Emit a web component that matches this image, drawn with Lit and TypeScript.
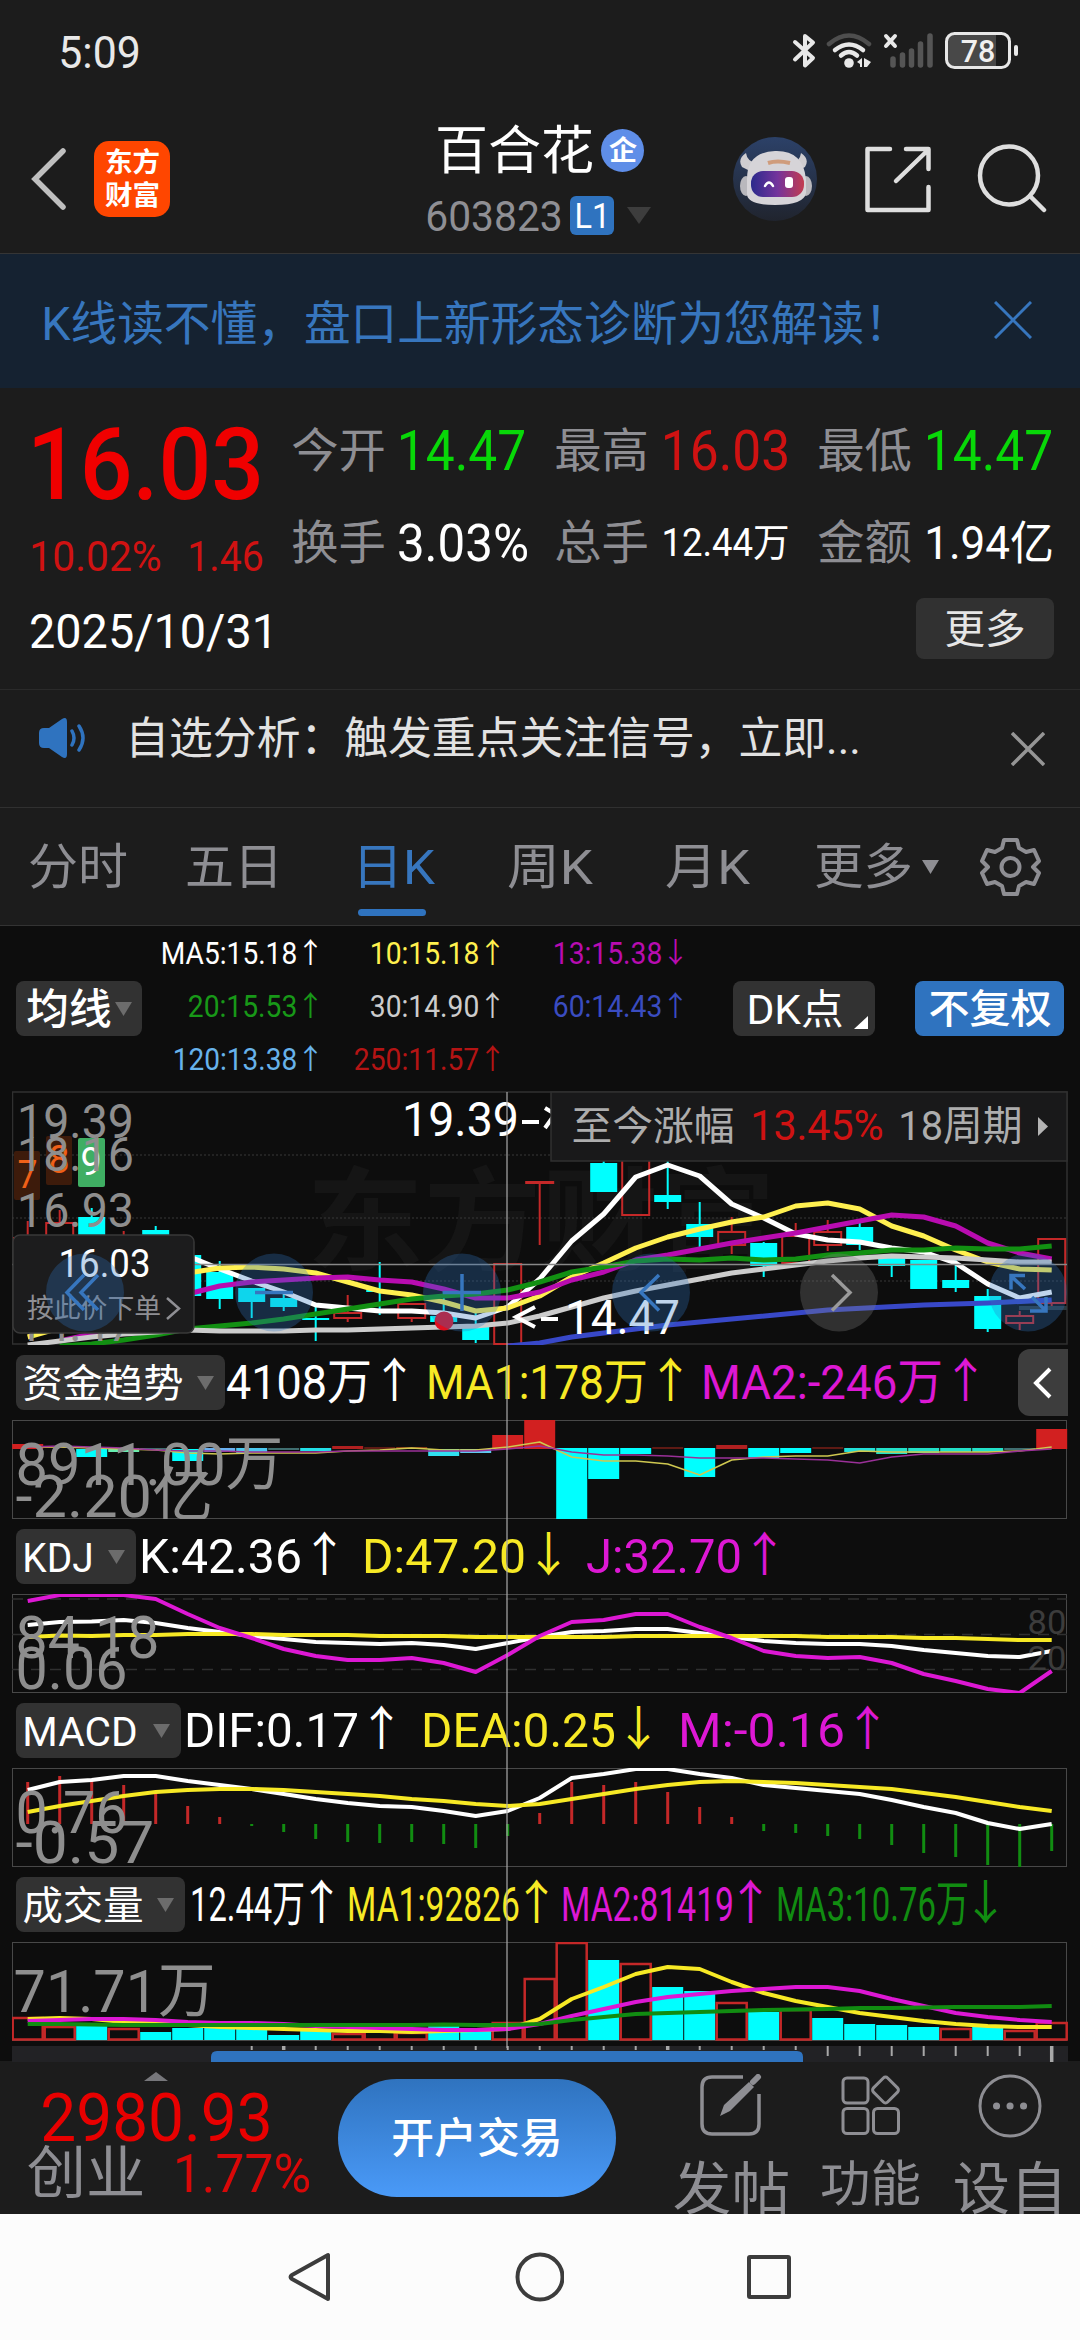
import { LitElement, html, svg, css } from "lit";
import { customElement } from "lit/decorators.js";

const STEP = 32;
const FIRST = 27.7;
const cx = (i: number) => FIRST + i * STEP;

type Point = [number, number];

// one y value for each trading day
const series = (start: number, values: number[]): Point[] => values.map((y, i) => [start + i, y]);

const line = (points: Point[], color: string, width = 5) => svg`
    <polyline points=${points.map(([i, y]) => `${cx(i)},${y}`).join(" ")} fill="none" stroke=${color} stroke-width=${width} stroke-linejoin="round" />`;

const label = (text: string, x: number, y: number, width: number, size: number, color = "#8e8e8e", weight = 400) => svg`
    <text x=${x - size * 0.04} y=${y} textLength=${width + size * 0.08} lengthAdjust="spacingAndGlyphs" font-size=${size} font-weight=${weight} fill=${color}>${text}</text>`;

// text that always fills the given width, its box is as high as the capitals
const fit = (text: string, width: number, size: number, color = "#fff", weight = 400) => html`
    <svg class="fit" width=${width} height=${Math.round(size * 0.72)}>${label(text, 0, Math.round(size * 0.72), width, size, color, weight)}</svg>`;

interface Value { text: string; width: number; arrow: string; color: string; }

const WHITE = "#ffffff";
const YELLOW = "#f7e925";
const MAGENTA = "#dd18d4";
const GREEN = "#118c11";
const RED = "#c42828";
const CYAN = "#00ffff";

// [day, top, bottom, high, low, rising]
const candles: [number, number, number, number, number, boolean][] = [
    [0, 1238, 1270, 1221, 1270, true],
    [1, 1223, 1260, 1210, 1260, true],
    [2, 1217, 1260, 1208, 1260, false],
    [3, 1240, 1260, 1231, 1260, true],
    [4, 1230, 1260, 1226, 1260, false],
    [5, 1255, 1296, 1250, 1296, false],
    [6, 1272, 1299, 1261, 1309, false],
    [7, 1288, 1302, 1288, 1318, false],
    [8, 1298, 1307, 1293, 1311, false],
    [9, 1318, 1320, 1305, 1341, false],
    [10, 1313, 1318, 1295, 1322, true],
    [11, 1290, 1292, 1262, 1315, false],
    [12, 1304, 1318, 1304, 1322, true],
    [13, 1316, 1322, 1290, 1322, false],
    [14, 1327, 1340, 1312, 1343, false],
    [15, 1264, 1344, 1264, 1344, true],
    [16, 1182, 1183, 1182, 1245, true],
    [18, 1163, 1192, 1158, 1192, false],
    [19, 1140, 1215, 1140, 1215, true],
    [20, 1195, 1202, 1158, 1209, false],
    [21, 1224, 1237, 1202, 1247, false],
    [22, 1232, 1245, 1217, 1254, true],
    [23, 1243, 1266, 1242, 1277, false],
    [24, 1236, 1263, 1223, 1263, true],
    [25, 1232, 1245, 1220, 1251, true],
    [26, 1227, 1245, 1223, 1250, false],
    [27, 1258, 1266, 1256, 1277, false],
    [28, 1260, 1289, 1260, 1289, false],
    [29, 1280, 1288, 1260, 1292, false],
    [30, 1296, 1329, 1289, 1332, false],
    [31, 1316, 1323, 1311, 1330, true],
    [32, 1239, 1303, 1239, 1306, true],
];

const ma5 = series(4, [1250, 1256, 1269, 1281, 1292, 1305, 1308, 1311, 1311, 1313, 1318, 1307, 1279, 1241, 1214, 1177, 1165, 1176, 1204, 1218, 1234, 1240, 1242, 1248, 1252, 1263, 1284, 1298, 1292]);
const ma10 = series(0, [1337, 1328, 1310, 1295, 1282, 1273, 1268, 1267, 1269, 1273, 1282, 1291, 1295, 1302, 1311, 1308, 1296, 1277, 1263, 1248, 1237, 1229, 1222, 1217, 1206, 1203, 1209, 1226, 1236, 1250, 1262, 1269, 1270]);
const ma13 = series(1, [1341, 1334, 1320, 1305, 1294, 1286, 1282, 1280, 1278, 1277, 1280, 1282, 1289, 1298, 1298, 1292, 1280, 1272, 1260, 1255, 1249, 1243, 1238, 1233, 1227, 1221, 1215, 1217, 1226, 1243, 1253, 1259]);
const ma20 = series(1, [1346, 1344, 1340, 1335, 1329, 1326, 1323, 1319, 1314, 1309, 1304, 1299, 1296, 1294, 1290, 1282, 1272, 1267, 1261, 1259, 1260, 1258, 1260, 1259, 1255, 1253, 1250, 1250, 1248, 1249, 1249, 1246]);
const ma30 = series(0, [1345, 1341, 1337, 1334, 1332, 1330, 1331, 1331, 1331, 1330, 1330, 1329, 1328, 1327, 1326, 1323, 1316, 1307, 1298, 1291, 1285, 1279, 1273, 1269, 1265, 1261, 1258, 1256, 1257, 1258, 1260, 1262, 1262]);
const ma60: Point[] = [[15, 1346], [16, 1343], [17, 1337], [18, 1333], [20, 1325], [22, 1319], [25, 1310], [28, 1305], [30, 1303], [32, 1300]];

// [day, top, bottom, color]
const flowBars: [number, number, number, string][] = [
    [0, 1443, 1448, "#d22020"], [1, 1445, 1447, "#7a1a1a"], [2, 1448, 1456, CYAN], [3, 1447, 1451, "#66eeb0"], [4, 1447, 1449, "#406e70"],
    [5, 1448, 1460, CYAN], [6, 1447, 1451, "#6ab0f0"], [7, 1447, 1452, "#4cc8f0"], [8, 1447, 1449, "#406e70"], [9, 1447, 1450, "#22e0e8"],
    [10, 1445, 1448, "#b02020"], [11, 1446, 1448, "#5e1a14"], [12, 1446, 1448, "#8a3a14"], [13, 1448, 1455, "#30e0f0"], [14, 1448, 1452, "#60c8f0"],
    [15, 1434, 1448, "#d22020"], [16, 1419, 1448, "#d22020"], [17, 1447, 1518, CYAN], [18, 1447, 1478, CYAN], [19, 1447, 1453, CYAN],
    [20, 1446, 1448, "#5e1a14"], [21, 1447, 1476, CYAN], [22, 1444, 1448, "#b02020"], [23, 1447, 1457, CYAN], [24, 1447, 1452, CYAN],
    [25, 1446, 1448, "#5e1a14"], [26, 1447, 1451, "#22e0d8"], [27, 1447, 1453, "#22e0c8"], [28, 1447, 1452, "#22e0c8"], [29, 1447, 1451, "#22e0c8"],
    [30, 1447, 1451, "#22e0c8"], [31, 1447, 1449, "#406e70"], [32, 1428, 1448, "#d22020"],
];
const flowFast = series(0, [1446, 1446, 1447, 1448, 1449, 1452, 1453, 1452, 1452, 1452, 1450, 1449, 1447, 1449, 1449, 1446, 1441, 1456, 1460, 1460, 1463, 1474, 1459, 1456, 1455, 1455, 1450, 1451, 1451, 1451, 1451, 1450, 1446]);
const flowSlow = series(0, [1446, 1445, 1446, 1447, 1449, 1450, 1450, 1451, 1451, 1451, 1450, 1450, 1450, 1450, 1450, 1448, 1445, 1451, 1454, 1454, 1455, 1457, 1457, 1457, 1458, 1459, 1462, 1456, 1453, 1453, 1453, 1450, 1448]);

const kdjK = series(0, [1624, 1621, 1620.5, 1619, 1622, 1627, 1631, 1635, 1638, 1641, 1642, 1643, 1642, 1644, 1648, 1642, 1636, 1631, 1630, 1628, 1628, 1632, 1636, 1640, 1642, 1643, 1643, 1645, 1649, 1652, 1655, 1656, 1650]);
const kdjD = series(0, [1636, 1634.5, 1635, 1634, 1634, 1633, 1633, 1633, 1634, 1634, 1634, 1635, 1635, 1635, 1636, 1636, 1636, 1636, 1636, 1635, 1635, 1635, 1635, 1635, 1635, 1636, 1636, 1636, 1637, 1637, 1638, 1639, 1639]);
const kdjJ = series(0, [1600, 1594, 1594, 1594, 1598, 1613, 1627, 1637, 1648, 1655, 1659, 1659, 1657, 1662, 1671, 1654, 1635, 1621, 1619, 1613, 1613, 1626, 1637, 1650, 1655, 1657, 1656, 1662, 1673, 1680, 1688, 1692, 1670]);

const macdBars = [1781, 1775, 1780, 1784, 1791, 1805, 1816, 1825, 1831, 1838, 1841, 1842, 1841, 1843, 1847, 1835, 1812, 1781, 1784, 1781, 1791, 1806, 1816, 1830, 1832, 1835, 1838, 1844, 1852, 1856, 1864, 1866, 1850];
const macdDif = series(0, [1789, 1781, 1779, 1775, 1775, 1780, 1784, 1788, 1793, 1798, 1802, 1805, 1806, 1810, 1815, 1810, 1797, 1777, 1773, 1768, 1768, 1773, 1777, 1784, 1787, 1790, 1793, 1799, 1806, 1812, 1822, 1828, 1823]);
const macdDea = series(0, [1811, 1805, 1800, 1795, 1791, 1789, 1788, 1788, 1789, 1791, 1793, 1795, 1798, 1800, 1803, 1805, 1803, 1798, 1793, 1788, 1784, 1781, 1780, 1781, 1782, 1784, 1786, 1788, 1792, 1796, 1801, 1806, 1810]);

const volumeTops = [2017, 2026, 2025, 2028, 2031, 2027, 2027, 2028, 2034, 2030, 2033, 2028, 2032, 2025, 2029, 2022, 1978, 1942, 1959, 1963, 1986, 1990, 2002, 2011, 2009, 2017, 2023, 2024, 2026, 2028, 2026, 2030, 2022];
const volumeRising = [0, 1, 3, 10, 11, 12, 15, 16, 17, 19, 22, 24, 29, 31, 32];
const volumeMa1 = series(0, [2018, 2017, 2018, 2021, 2022, 2024, 2026, 2027, 2028, 2029, 2030, 2030, 2031, 2030, 2029, 2028, 2018, 1998, 1986, 1973, 1966, 1968, 1981, 1992, 2000, 2006, 2012, 2016, 2020, 2023, 2025, 2026, 2026]);
const volumeMa2 = series(0, [2020, 2019, 2018, 2018, 2019, 2021, 2022, 2022, 2023, 2025, 2026, 2027, 2028, 2029, 2029, 2028, 2023, 2015, 2008, 2001, 1996, 1993, 1990, 1988, 1986, 1986, 1990, 1998, 2005, 2012, 2016, 2019, 2021]);
const volumeMa3 = series(0, [2023, 2023, 2023.5, 2024, 2024, 2024, 2024, 2024, 2024, 2024, 2024, 2024, 2024, 2023.5, 2024, 2024, 2023, 2019, 2016, 2013, 2012, 2011, 2010, 2009, 2008.5, 2008, 2007, 2007, 2006.5, 2006, 2006, 2006, 2005]);

const caret = html`<svg class="caret" width="17" height="14" viewBox="0 0 17 14"><path d="M0 0h17l-8.500 14z" fill="#6c6c6c" /></svg>`;

@customElement("app-root")
export class AppRoot extends LitElement {
    static styles = css`
        :host {
            display: block;
            width: 1080px;
            height: 2340px;
            overflow: hidden;
            background-color: #1c1c1c;
            color: white;
            font-family: Roboto, "Noto Sans CJK SC", sans-serif;
        }
        svg {
            display: block;
            flex: none;
        }
        .fit {
            overflow: visible;
        }
        .row {
            display: flex;
            align-items: center;
        }
        .status {
            padding: 32px 62px 0 60px;
            justify-content: space-between;
            align-items: flex-start;
            box-sizing: border-box;
            height: 104px;
        }
        .time {
            padding-top: 4px;
        }
        .header {
            display: grid;
            grid-template-columns: 94px 76px 257px 246px 60px 84px 47px 66px 48px 70px;
            align-items: center;
            height: 150px;
            box-sizing: border-box;
            border-bottom: 1px solid #353535;
        }
        .back {
            margin-left: 30px;
        }
        .logo {
            display: flex;
            flex-direction: column;
            align-items: center;
            justify-content: center;
            gap: 14px;
            width: 76px;
            height: 76px;
            border-radius: 15px;
            background-color: #ff4600;
        }
        .stock {
            grid-column: 4;
            display: flex;
            flex-direction: column;
            gap: 24px;
            padding-top: 7px;
        }
        .name {
            gap: 9px;
            padding-left: 10px;
        }
        .badge {
            display: flex;
            align-items: center;
            justify-content: center;
            width: 43px;
            height: 43px;
            border-radius: 50%;
            background-color: #5f8ee8;
        }
        .code {
            gap: 9px;
            height: 39px;
        }
        .level {
            display: flex;
            align-items: center;
            justify-content: center;
            width: 44px;
            height: 39px;
            border-radius: 6px;
            background-color: #2f73bf;
        }
        .robot {
            grid-column: 6;
        }
        .share {
            grid-column: 8;
        }
        .search {
            grid-column: 10;
            margin-left: -1px;
        }
        .banner {
            height: 134px;
            box-sizing: border-box;
            padding: 0 48px 2px 43px;
            justify-content: space-between;
            background-color: #152231;
        }
        .advice {
            padding-top: 6px;
        }
        .quote {
            display: grid;
            grid-template-columns: 262px 1fr;
            height: 302px;
            box-sizing: border-box;
            border-bottom: 1px solid #2a2a2a;
        }
        .price {
            padding: 38px 0 0 31px;
        }
        .change {
            justify-content: space-between;
            margin: 41px 0 42px;
        }
        .stats {
            display: grid;
            grid-template-columns: 106px 157px 107px 156px 107px 128px;
            grid-template-rows: 92px 92px 92px;
            align-items: center;
            padding: 16px 0 0 31px;
        }
        .more {
            display: flex;
            align-items: center;
            justify-content: center;
            grid-column: 5 / 7;
            justify-self: end;
            width: 138px;
            height: 61px;
            margin-bottom: 12px;
            border-radius: 8px;
            background-color: #313131;
        }
        .notice {
            height: 118px;
            box-sizing: border-box;
            padding: 0 35px 0 38px;
            border-bottom: 1px solid #303030;
        }
        .message {
            flex: 1;
            margin-top: -20px;
            padding: 0 0 2px 40px;
        }
        .speaker {
            margin-top: -22px;
        }
        .tabs {
            display: grid;
            grid-template-columns: 157px 171px 151px 158px 149px 106px 61px;
            align-items: center;
            height: 118px;
            padding-left: 30px;
            box-sizing: border-box;
            border-bottom: 1px solid #333;
        }
        .tab {
            position: relative;
        }
        .selected::after {
            content: "";
            position: absolute;
            left: 0;
            bottom: -32px;
            width: 68px;
            height: 7px;
            border-radius: 4px;
            background-color: #2f73bf;
        }
        .selected .fit {
            margin-left: -4px;
        }
        .chart {
            position: relative;
            height: 1135px;
            background-color: #0d0d0d;
        }
        .averages {
            display: grid;
            grid-template-columns: 126px 177px 182px 183px 49px 142px 40px 149px;
            align-items: center;
            height: 165px;
            padding-left: 16px;
        }
        .column {
            display: flex;
            flex-direction: column;
            align-items: flex-end;
            gap: 31px;
            height: 130px;
            padding-bottom: 3px;
        }
        .value {
            display: flex;
            align-items: center;
            gap: 6px;
        }
        .button {
            display: flex;
            align-items: center;
            height: 55px;
            border-radius: 8px;
            background-color: #323232;
            box-sizing: border-box;
        }
        .button .caret {
            margin-left: auto;
        }
        .average {
            padding: 0 10px 0 12px;
        }
        .dk {
            grid-column: 6;
            padding: 0 7px 0 15px;
            justify-content: space-between;
        }
        .corner {
            align-self: flex-end;
            margin-bottom: 7px;
        }
        .restore {
            grid-column: 8;
            justify-content: center;
            background-color: #2f73bf;
        }
        .arrow {
            overflow: visible;
            font-family: "Noto Sans CJK SC", sans-serif;
        }
        .panel {
            margin-left: 12px;
        }
        .indicator {
            display: flex;
            align-items: center;
            height: 75px;
            padding-left: 16px;
        }
        .indicator .button {
            padding: 0 11px 0 8px;
        }
        .values {
            display: flex;
            align-items: center;
            padding-bottom: 3px;
        }
        .drawer {
            display: flex;
            align-items: center;
            justify-content: center;
            width: 50px;
            height: 67px;
            margin: 0 12px 0 auto;
            border-radius: 12px 0 0 12px;
            background-color: #3d3d3d;
        }
        .crosshair {
            position: absolute;
            left: 506px;
            top: 166px;
            width: 2px;
            height: 956px;
            background-color: rgba(170, 170, 170, 0.6);
        }
        .bottom {
            display: grid;
            grid-template-columns: 338px 278px 58px 114px 32px 101px 30px 129px;
            height: 153px;
            overflow: hidden;
        }
        .index {
            padding: 11px 0 0 29px;
        }
        .up {
            margin-left: 115px;
        }
        .points {
            margin: 12px 0 0 14px;
        }
        .market {
            gap: 32px;
            margin-top: 11px;
        }
        .trade {
            display: flex;
            align-items: center;
            justify-content: center;
            height: 118px;
            margin-top: 18px;
            border-radius: 59px;
            background-image: linear-gradient(#2f73bf, #4a9af8);
        }
        .action {
            display: flex;
            flex-direction: column;
            align-items: center;
            gap: 30px;
            padding-top: 13px;
        }
        .post {
            grid-column: 4;
        }
        .tools {
            grid-column: 6;
        }
        .settings {
            grid-column: 8;
            padding-right: 12px;
        }
        .nav {
            display: flex;
            align-items: center;
            justify-content: center;
            gap: 182px;
            height: 126px;
            background-color: #fcfcfc;
        }
    `;

    render() {
        return html`
            ${this._status()}
            ${this._header()}
            <div class="row banner">
                <div class="advice">${fit("K线读不懂，盘口上新形态诊断为您解读！", 866, 46.8, "#3776be")}</div>
                <svg width="38" height="38" viewBox="0 0 38 38"><path d="M1 1l36 36M37 1L1 37" stroke="#3776be" stroke-width="3" /></svg>
            </div>
            ${this._quote()}
            <div class="row notice">
                <svg class="speaker" width="49" height="40" viewBox="0 0 49 40">
                    <path d="M1 15q0-5 5-5h5L24 1q5-3 5 3v32q0 6-5 3L11 30H6q-5 0-5-5z" fill="#2f73bf" />
                    <path d="M34 13q4 7 0 14M41 8q8 12 0 24" fill="none" stroke="#2f73bf" stroke-width="3.500" stroke-linecap="round" />
                </svg>
                <div class="message">${fit("自选分析：触发重点关注信号，立即...", 732, 44.3, "#e2e2e2")}</div>
                <svg width="34" height="34" viewBox="0 0 34 34"><path d="M1 1l32 32M33 1L1 33" stroke="#959595" stroke-width="3.500" /></svg>
            </div>
            ${this._tabs()}
            <div class="chart">
                ${this._averages()}
                ${this._candlePanel()}
                ${this._indicator("资金趋势", 209, 158, 39, 3, 20.5, 25, [
                    { text: "4108万", width: 142, arrow: "↑", color: WHITE },
                    { text: "MA1:178万", width: 218, arrow: "↑", color: YELLOW },
                    { text: "MA2:-246万", width: 238, arrow: "↑", color: MAGENTA },
                ], true)}
                ${this._flowPanel()}
                ${this._indicator("KDJ", 120, 68, 41, 5, 27, 25, [
                    { text: "K:42.36", width: 159, arrow: "↑", color: WHITE },
                    { text: "D:47.20", width: 160, arrow: "↓", color: YELLOW },
                    { text: "J:32.70", width: 152, arrow: "↑", color: MAGENTA },
                ])}
                ${this._kdjPanel()}
                ${this._indicator("MACD", 165, 112, 41, 5, 29, 25, [
                    { text: "DIF:0.17", width: 171, arrow: "↑", color: WHITE },
                    { text: "DEA:0.25", width: 191, arrow: "↓", color: YELLOW },
                    { text: "M:-0.16", width: 163, arrow: "↑", color: MAGENTA },
                ])}
                ${this._macdPanel()}
                ${this._indicator("成交量", 169, 118, 39, 7, 18.5, 17, [
                    { text: "12.44万", width: 111, arrow: "↑", color: WHITE },
                    { text: "MA1:92826", width: 169, arrow: "↑", color: YELLOW },
                    { text: "MA2:81419", width: 169, arrow: "↑", color: MAGENTA },
                    { text: "MA3:10.76万", width: 189, arrow: "↓", color: GREEN },
                ])}
                ${this._volumePanel()}
                <div class="crosshair"></div>
            </div>
            ${this._bottom()}
            <div class="nav">
                <svg width="44" height="50" viewBox="0 0 44 50"><path d="M40 3v44L4 27q-3-2 0-4z" fill="none" stroke="#3c3c3c" stroke-width="4" stroke-linejoin="round" /></svg>
                <svg width="50" height="50" viewBox="0 0 50 50"><circle cx="26" cy="25" r="22.500" fill="none" stroke="#3c3c3c" stroke-width="4" /></svg>
                <svg width="46" height="46" viewBox="0 0 46 46"><rect x="3" y="3" width="40" height="40" rx="1" fill="none" stroke="#3c3c3c" stroke-width="4" /></svg>
            </div>
        `;
    }

    _status() {
        return html`
            <div class="row status">
                <div class="time">${fit("5:09", 79, 44, "#e8e8e8")}</div>
                <svg width="226" height="40" viewBox="792 32 226 40">
                    <g fill="none" stroke="#e8e8e8" stroke-linecap="round" stroke-linejoin="round">
                        <path d="M795 42l18 16-8 7.500V36l8 6.500-18 17" stroke-width="4" />
                        <path d="M829 44q20-17 40 0" stroke="#4e4e4e" stroke-width="4.500" />
                        <path d="M835 50q14-11 28 0M841 55.500q8-7 16 0" stroke-width="4.500" />
                        <path d="M886 36l9 10M895 36l-9 10" stroke-width="4" />
                    </g>
                    <circle cx="849" cy="63" r="4.800" fill="#e8e8e8" />
                    <path d="M857 62l5-4v9h-2v-3zM864 58l7 4-4 5h-3z" fill="#e8e8e8" />
                    <path d="M893 59v6M902.500 55v10M911.500 51v14M920.500 44v21M930 36v29" stroke="#555" stroke-width="5.500" stroke-linecap="round" />
                    <rect x="948" y="35" width="48" height="31" fill="#484848" />
                    <rect x="946.500" y="33.500" width="63" height="34" rx="8" fill="none" stroke="#e8e8e8" stroke-width="3" />
                    <path d="M1016 47v7" stroke="#e8e8e8" stroke-width="4" stroke-linecap="round" />
                    ${label("78", 962, 62, 32, 32, "#f0f0f0", 500)}
                </svg>
            </div>
        `;
    }

    _header() {
        return html`
            <div class="header">
                <svg class="back" width="36" height="62" viewBox="0 0 36 62"><path d="M33 3L5 31l28 28" fill="none" stroke="#bfbfbf" stroke-width="5.500" stroke-linecap="round" /></svg>
                <div class="logo">
                    ${fit("东方", 53, 27, "#fff", 700)}
                    ${fit("财富", 53, 27, "#fff", 700)}
                </div>
                <div class="stock">
                    <div class="row name">
                        ${fit("百合花", 155, 52)}
                        <div class="badge">${fit("企", 26, 27, "#fff", 700)}</div>
                    </div>
                    <div class="row code">
                        ${fit("603823", 134, 43, "#8f8f94")}
                        <div class="level">${fit("L1", 33, 35)}</div>
                        <svg width="30" height="18" viewBox="-4 0 30 18"><path d="M0 0h24L12 17z" fill="#3d3d3d" /></svg>
                    </div>
                </div>
                ${this._robot()}
                <svg class="share" width="68" height="68" viewBox="0 0 68 68">
                    <path d="M26 4H3.500v61h61V42M42 4h22.500v20M62 7L32 36" fill="none" stroke="#dedede" stroke-width="4.500" stroke-linecap="round" stroke-linejoin="round" />
                </svg>
                <svg class="search" width="70" height="70" viewBox="978 143 70 70">
                    <g fill="none" stroke="#dedede" stroke-width="4.500" stroke-linecap="round"><circle cx="1010" cy="174.500" r="29" /><path d="M1031 195l14 14" /></g>
                </svg>
            </div>
        `;
    }

    _robot() {
        return html`
            <svg class="robot" width="84" height="84" viewBox="0 0 84 84">
                <defs>
                    <linearGradient id="sky" x1="0" y1="0" x2="0" y2="1"><stop offset="0" stop-color="#2c4168" /><stop offset="1" stop-color="#20242e" /></linearGradient>
                    <linearGradient id="visor"><stop offset="0" stop-color="#2b2a8c" /><stop offset=".5" stop-color="#74349c" /><stop offset="1" stop-color="#c23c50" /></linearGradient>
                </defs>
                <circle cx="42" cy="42" r="42" fill="url(#sky)" />
                <path d="M13 16q-9 6-4 14l8 4 6-8q-9-2-10-10zM68 16q9 6 4 14l-8 4-5-8q8-2 9-10z" fill="#cfcdd0" />
                <ellipse cx="13" cy="49" rx="6" ry="10" fill="#b9b8bd" />
                <ellipse cx="73" cy="49" rx="6" ry="10" fill="#b9b8bd" />
                <path d="M14 42Q14 15 42 14t31 28v14q-2 12-31 12T14 56z" fill="#d6d4d8" />
                <rect x="18" y="34" width="53" height="26" rx="12" fill="url(#visor)" />
                <path d="M35 26q9-3 22 0" stroke="#cf9c7c" stroke-width="4" />
                <path d="M32 49q4-7 8 0" fill="none" stroke="#fff" stroke-width="2.500" stroke-linecap="round" />
                <rect x="52" y="40" width="8" height="11" rx="3" fill="#fff" />
            </svg>
        `;
    }

    _quote() {
        const grey = "#8e8e93";
        return html`
            <div class="quote">
                <div class="price">
                    ${fit("16.03", 229, 101, "#f00000", 500)}
                    <div class="row change">
                        ${fit("10.02%", 129, 43, "#cf1212")}
                        ${fit("1.46", 73, 43, "#cf1212")}
                    </div>
                    ${fit("2025/10/31", 245, 49)}
                </div>
                <div class="stats">
                    ${fit("今开", 91, 46.500, grey)}${fit("14.47", 125, 55, "#08d808")}
                    ${fit("最高", 91, 46.500, grey)}${fit("16.03", 125, 55, "#cf1212")}
                    ${fit("最低", 91, 46.500, grey)}${fit("14.47", 125, 55, "#08d808")}
                    ${fit("换手", 91, 46.500, grey)}${fit("3.03%", 128, 52)}
                    ${fit("总手", 91, 46.500, grey)}${fit("12.44万", 125, 39)}
                    ${fit("金额", 91, 46.500, grey)}${fit("1.94亿", 126, 46)}
                    <div class="more">${fit("更多", 78, 40, "#e6e6e6")}</div>
                </div>
            </div>
        `;
    }

    _tabs() {
        const grey = "#8e8e93";
        return html`
            <div class="tabs">
                <div class="tab">${fit("分时", 96, 49, grey)}</div>
                <div class="tab">${fit("五日", 94, 49, grey)}</div>
                <div class="tab selected">${fit("日K", 79, 49, "#3776be")}</div>
                <div class="tab">${fit("周K", 82, 49, grey)}</div>
                <div class="tab">${fit("月K", 81, 49, grey)}</div>
                <div class="tab">${fit("更多", 95, 49, grey)}</div>
                <svg width="120" height="60" viewBox="922 837 120 60">
                    <path d="M922 860h17l-8.500 14z" fill="${grey}" />
                    <path d="M1004 840h13l2 8 7 4 8-2 5 11-6 6 6 6-5 11-8-2-7 4-2 8h-13l-2-8-7-4-8 2-5-11 6-6-6-6 5-11 8 2 7-4z" fill="none" stroke="${grey}" stroke-width="4" stroke-linejoin="round" />
                    <circle cx="1010.500" cy="867" r="9" fill="none" stroke="${grey}" stroke-width="4" />
                </svg>
            </div>
        `;
    }

    _arrow(arrow: string, width: number, size: number, color: string) {
        return html`
            <svg class="arrow" width=${width} height=${size * 0.72}>
                <text x=${width / 2} y=${size * 0.7} text-anchor="middle" font-size=${size} fill=${color}>${arrow}</text>
            </svg>
        `;
    }

    _average(text: string, width: number, arrow: string, color: string) {
        return html`<div class="value">${fit(text, width, 31, color)}${this._arrow(arrow, 17, 28, color)}</div>`;
    }

    _averages() {
        return html`
            <div class="averages">
                <div class="button average">${fit("均线", 82, 42, WHITE, 500)}${caret}</div>
                <div class="column">
                    ${this._average("MA5:15.18", 134, "↑", WHITE)}
                    ${this._average("20:15.53", 107, "↑", "#189818")}
                    ${this._average("120:13.38", 122, "↑", "#67b2ea")}
                </div>
                <div class="column">
                    ${this._average("10:15.18", 107, "↑", "#fff04e")}
                    ${this._average("30:14.90", 107, "↑", "#cccccc")}
                    ${this._average("250:11.57", 123, "↑", "#b41414")}
                </div>
                <div class="column">
                    ${this._average("13:15.38", 107, "↓", "#b80cb0")}
                    ${this._average("60:14.43", 107, "↑", "#3a4cc0")}
                </div>
                <div class="button dk">
                    ${fit("DK点", 94, 41)}
                    <svg class="corner" width="14" height="13" viewBox="0 0 14 13"><path d="M14 0v13H0z" fill="#fff" /></svg>
                </div>
                <div class="button restore">${fit("不复权", 120, 40, WHITE, 500)}</div>
            </div>
        `;
    }

    _candle([i, top, bottom, high, low, rising]: [number, number, number, number, number, boolean]) {
        const x = cx(i);
        if (rising) {
            return svg`
                <path d="M${x} ${high}V${top}M${x} ${bottom}V${low}" stroke=${RED} stroke-width="2" />
                <rect x=${x - 13.5} y=${top} width="27" height=${bottom - top} fill="none" stroke=${RED} stroke-width="2" />`;
        }
        return svg`
            <path d="M${x} ${high}V${low}" stroke=${CYAN} stroke-width="2" />
            <rect x=${x - 13.5} y=${top} width="27" height=${bottom - top} fill=${CYAN} />`;
    }

    _candlePanel() {
        const blue = "rgba(47, 115, 191, 0.3)";
        return html`
            <svg class="panel" width="1056" height="254" viewBox="12 1091 1056 254">
                ${label("东方财富", 311, 1262, 460, 112, "#151515", 700)}
                <rect x="12.500" y="1092" width="1054.500" height="252" fill="none" stroke="#303030" stroke-width="1.500" />
                <path d="M12 1155h1055M12 1218h1055M12 1281h1055" stroke="#383838" stroke-dasharray="2 2" />
                ${candles.map((c) => this._candle(c))}
                ${line(ma5, WHITE)}
                ${line(ma10, "#fff050")}
                ${line(ma13, "#b80cb0")}
                ${line(ma20, "#129012")}
                ${line(ma30, "#cccccc")}
                ${line(ma60, "#3848c8")}
                <path d="M12 1264.500h1055" stroke="#888" stroke-width="1.500" />
                <circle cx="444" cy="1321" r="9.500" fill="#e01020" />
                <path d="M1019 1308h48" stroke="#2c3a40" stroke-width="4" />

                <rect x="14" y="1151" width="26" height="49" rx="2" fill="#3d1b0b" />
                <rect x="46" y="1136" width="26" height="49" rx="2" fill="#3d1b0b" />
                <rect x="78" y="1138" width="27" height="49" rx="2" fill="#3fae63" />
                ${label("7", 19, 1188, 17, 38, "#f06018")}
                ${label("8", 50, 1173, 18, 38, "#f06018")}
                ${label("9", 82, 1175, 18, 38, "#fff")}
                ${label("19.39", 19, 1138, 113, 49)}
                ${label("18.16", 19, 1171, 113, 49)}
                ${label("16.93", 19, 1227, 113, 49)}
                ${label("14.47", 19, 1341, 113, 49)}
                ${label("19.39", 404, 1136, 113, 49, WHITE)}
                <path d="M522 1122h17M545 1108l10 6-10 14" fill="none" stroke="#fff" stroke-width="4" />
                <path d="M535 1307l-19 10 19 10M541 1319h17" fill="none" stroke="#fff" stroke-width="4" />
                ${label("14.47", 567, 1334, 111, 49, WHITE)}

                <rect x="551" y="1092" width="516" height="69" fill="#19191a" stroke="#303030" stroke-width="1.500" />
                ${label("至今涨幅", 573, 1140, 160, 40, "#adadad")}
                ${label("13.45%", 752, 1140, 130, 43, "#cf1212")}
                ${label("18周期", 900, 1140, 121, 41, "#adadad")}
                <path d="M1038 1117v19l10-9.500z" fill="#b4b4b4" />

                <rect x="13" y="1235" width="181" height="98" rx="7" fill="#1c1c1d" stroke="#383838" stroke-width="1.500" />
                ${label("16.03", 60, 1277, 89, 38, WHITE)}
                ${label("按此价下单", 28, 1318, 132, 27, "#8f8f94")}
                <path d="M167 1298l12 10.500-12 10.500" fill="none" stroke="#8f8f94" stroke-width="2.500" />

                ${[85, 274, 462, 651, 1028].map((x) => svg`<circle cx=${x} cy="1292.500" r="39" fill=${blue} />`)}
                <circle cx="839" cy="1292.500" r="39" fill="rgba(130, 130, 130, 0.3)" />
                <g fill="none" stroke="#3776be" stroke-width="3.500">
                    <path d="M84 1275l-17 17.500 17 17.500M98 1275l-17 17.500 17 17.500" />
                    <path d="M255 1292.500h38M443 1292.500h38M462 1274v37" />
                    <path d="M659 1275l-18 17.500 18 18" />
                    <path d="M1025 1275.500h-14v14M1011 1276l14 13M1030 1311h16v-14M1046 1311l-14-14" />
                </g>
                <path d="M832 1275l18 17.500-18 18" fill="none" stroke="#9a9a9a" stroke-width="3.500" />
            </svg>
        `;
    }

    _indicator(name: string, buttonWidth: number, nameWidth: number, nameSize: number, margin: number, gap: number, arrowWidth: number, values: Value[], drawer = false) {
        return html`
            <div class="indicator">
                <div class="button" style="width: ${buttonWidth}px">${fit(name, nameWidth, nameSize)}${caret}</div>
                <div class="values" style="gap: ${gap}px; padding-left: ${margin}px">
                    ${values.map((v) => html`
                        <div class="value" style="gap: ${arrowWidth > 20 ? 12 : 10}px">
                            ${fit(v.text, v.width, 49, v.color)}${this._arrow(v.arrow, arrowWidth, 47, v.color)}
                        </div>`)}
                </div>
                ${drawer ? html`
                    <div class="drawer">
                        <svg width="20" height="32" viewBox="0 0 20 32"><path d="M17 2L3 16l14 14" fill="none" stroke="#fff" stroke-width="4" /></svg>
                    </div>` : ""}
            </div>
        `;
    }

    _panel(top: number, content: unknown) {
        return html`
            <svg class="panel" width="1056" height="99" viewBox="12 ${top} 1056 99">
                <rect x="12.500" y=${top + 0.5} width="1054" height="98" fill="none" stroke="#484848" />
                ${content}
            </svg>
        `;
    }

    _flowPanel() {
        return this._panel(1419, svg`
            ${flowBars.map(([i, top, bottom, color]) => svg`<rect x=${cx(i) - 15.5} y=${top} width="31" height=${bottom - top} fill=${color} />`)}
            ${line(flowFast, "#cfc850", 1.5)}
            ${line(flowSlow, "#9a3098", 1.5)}
            ${label("8911.00万", 18, 1484, 263, 60)}
            ${label("-2.20亿", 18, 1516, 193, 60)}
        `);
    }

    _kdjPanel() {
        return this._panel(1593, svg`
            <path d="M12 1598h1055M12 1633.500h1055M12 1668.500h1055" stroke="#303030" stroke-width="1.500" stroke-dasharray="11 8" />
            ${line(kdjK, WHITE, 4)}
            ${line(kdjD, YELLOW, 4)}
            ${line(kdjJ, MAGENTA, 4)}
            ${label("84.18", 18, 1657, 139, 60)}
            ${label("0.06", 18, 1688, 107, 60)}
            ${label("80", 1029, 1633, 36, 34, "#3c3c3c")}
            ${label("20", 1029, 1669, 36, 34, "#3c3c3c")}
        `);
    }

    _macdPanel() {
        return this._panel(1767, svg`
            ${macdBars.map((y, i) => svg`<path d="M${cx(i)} 1823V${y}" stroke=${y < 1823 ? RED : GREEN} stroke-width="3" />`)}
            ${line(macdDif, WHITE, 4)}
            ${line(macdDea, YELLOW, 4)}
            ${label("0.76", 18, 1832, 107, 60)}
            ${label("-0.57", 18, 1862, 134, 60)}
        `);
    }

    _volumePanel() {
        const ticks = Array.from({ length: 26 }, (_, k) => k + 7);
        return html`
            ${this._panel(1941, svg`
                ${volumeTops.map((y, i) => volumeRising.includes(i)
                    ? svg`<rect x=${cx(i) - 15} y=${y} width="30" height=${2038.5 - y} fill="none" stroke=${RED} stroke-width="2.500" />`
                    : svg`<rect x=${cx(i) - 15.5} y=${y} width="31" height=${2039 - y} fill=${CYAN} />`)}
                ${line(volumeMa1, YELLOW, 4)}
                ${line(volumeMa2, MAGENTA, 4)}
                ${line(volumeMa3, "#118c11", 4)}
                ${label("71.71万", 16, 2011, 197, 60)}
            `)}
            <svg class="panel" width="1056" height="21" viewBox="12 2040 1056 21">
                <rect x="12" y="2045" width="1056" height="16" fill="#222225" />
                <path d="M211 2062v-6q0-6 6-6h580q6 0 6 6v6z" fill="#2f73bf" />
                ${ticks.map((i) => svg`<path d="M${cx(i)} 2045V${i === 32 ? 2061 : i > 24 ? 2055 : 2049}" stroke="#a8a8a8" stroke-width=${[8, 20, 32].includes(i) ? 3.5 : 2} />`)}
            </svg>
        `;
    }

    _bottom() {
        const grey = "#8e8e93";
        return html`
            <div class="bottom">
                <div class="index">
                    <svg class="up" width="24" height="9" viewBox="0 0 24 9"><path d="M0 9L12 0l12 9z" fill="#77777b" /></svg>
                    <div class="points">${fit("2980.93", 227, 67, "#e80000")}</div>
                    <div class="row market">
                        ${fit("创业", 114, 57, grey)}
                        ${fit("1.77%", 134, 53, "#d80808")}
                    </div>
                </div>
                <div class="trade">${fit("开户交易", 168, 42, "#fff", 500)}</div>
                <div class="action post">
                    <svg width="64" height="64" viewBox="701 2074 64 64">
                        <path d="M745 2077h-31q-10 0-10 10v37q0 10 10 10h37q10 0 10-10v-30" fill="none" stroke="${grey}" stroke-width="3.500" />
                        <path d="M722 2116l4-11 25-23 5 5-24 24z" fill="${grey}" />
                        <path d="M755 2082l5-5" stroke="${grey}" stroke-width="6" stroke-linecap="round" />
                    </svg>
                    ${fit("发帖", 113, 57, grey)}
                </div>
                <div class="action tools">
                    <svg width="62" height="62" viewBox="841 2074 62 62">
                        <g fill="none" stroke="${grey}" stroke-width="3">
                            <rect x="844" y="2078" width="25" height="25" rx="4" />
                            <rect x="844" y="2108.500" width="25" height="25" rx="4" />
                            <rect x="874.500" y="2108.500" width="25" height="25" rx="4" />
                            <rect x="876.500" y="2080" width="20" height="20" rx="3" transform="rotate(45 886.500 2090)" />
                        </g>
                    </svg>
                    ${fit("功能", 97, 49, grey)}
                </div>
                <div class="action settings">
                    <svg width="64" height="64" viewBox="0 0 64 64">
                        <circle cx="32" cy="32" r="30" fill="none" stroke="${grey}" stroke-width="3" />
                        <path d="M18.500 32h.1M32 32h.1M45.500 32h.1" stroke="${grey}" stroke-width="7" stroke-linecap="round" />
                    </svg>
                    ${fit("设自", 110, 57, grey)}
                </div>
            </div>
        `;
    }
}
